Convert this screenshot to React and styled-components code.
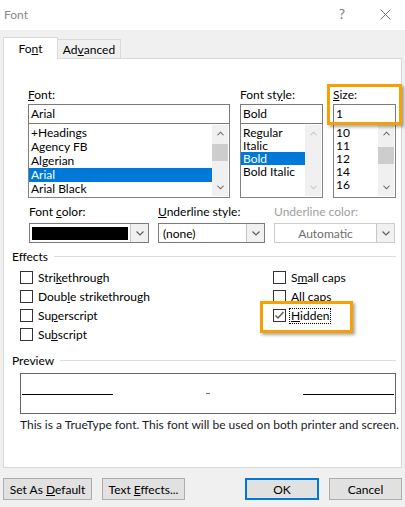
import React from "react";
import styled, { createGlobalStyle } from "styled-components";

const GlobalStyle = createGlobalStyle`
  body {
    margin: 0;
    background: #f0f0f0;
    font-family: Lato, "Noto Sans", sans-serif;
    font-size: 12px;
    color: #000;
  }
`;

const fontItems = ["+Headings", "Agency FB", "Algerian", "Arial", "Arial Black"];
const styleItems = ["Regular", "Italic", "Bold", "Bold Italic"];
const sizeItems = ["10", "11", "12", "14", "16"];

const Chevron = ({ up, color = "#606060", w = 8 }) => (
  <svg width={w} height="5" viewBox="0 0 8 5">
    <polyline
      points={up ? "0.5,4.5 4,1 7.5,4.5" : "0.5,0.5 4,4 7.5,0.5"}
      fill="none"
      stroke={color}
      strokeWidth="1.2"
    />
  </svg>
);

const ListBox = ({ items, selected, rowHeight, thumbTop, disabled }) => (
  <List>
    <Items>
      {items.map((it) => (
        <Item key={it} $h={rowHeight} $active={it === selected}>
          {it}
        </Item>
      ))}
    </Items>
    <Scroll>
      <ArrowBox>
        <Chevron up color={disabled ? "#c4c4c4" : "#606060"} w={7} />
      </ArrowBox>
      <Track>{!disabled && <Thumb $top={thumbTop} />}</Track>
      <ArrowBox>
        <Chevron color={disabled ? "#c4c4c4" : "#606060"} w={7} />
      </ArrowBox>
    </Scroll>
  </List>
);

const Check = ({ checked, children, focus }) => (
  <CheckRow>
    <Box>
      {checked && (
        <svg width="11" height="11" viewBox="0 0 11 11">
          <polyline points="1.5,5.5 4,8 9.5,2" fill="none" stroke="#5a5a5a" strokeWidth="1.4" />
        </svg>
      )}
    </Box>
    <CheckText $focus={focus}>{children}</CheckText>
  </CheckRow>
);

export default function App() {
  return (
    <Window>
      <GlobalStyle />
      <TitleBar>
        <Title>Font</Title>
        <Help>?</Help>
        <Close>
          <svg width="11" height="11" viewBox="0 0 11 11">
            <path d="M0.5 0.5 L10.5 10.5 M10.5 0.5 L0.5 10.5" stroke="#777" strokeWidth="1" />
          </svg>
        </Close>
      </TitleBar>

      <TabStrip>
        <Tab $active>
          Fo<u>n</u>t
        </Tab>
        <Tab>
          Ad<u>v</u>anced
        </Tab>
      </TabStrip>

      <Panel>
        <TopGrid>
          <Column>
            <Label>
              <u>F</u>ont:
            </Label>
            <Input>Arial</Input>
            <ListBox items={fontItems} selected="Arial" rowHeight={14} thumbTop={19} />
          </Column>
          <Column>
            <Label>
              Font st<u>y</u>le:
            </Label>
            <Input>Bold</Input>
            <ListBox items={styleItems} selected="Bold" rowHeight={13} disabled />
          </Column>
          <Column>
            <Highlight $top={-4} $left={-6} $width={75} $height={41} />
            <Label>
              <u>S</u>ize:
            </Label>
            <Input>1</Input>
            <ListBox items={sizeItems} rowHeight={13} thumbTop={22} />
          </Column>
        </TopGrid>

        <ColorRow>
          <div>
            <Label $h={18}>
              Font <u>c</u>olor:
            </Label>
            <Select>
              <SelectValue>
                <Swatch />
              </SelectValue>
              <DropButton>
                <Chevron />
              </DropButton>
            </Select>
          </div>
          <div>
            <Label $h={18}>
              <u>U</u>nderline style:
            </Label>
            <Select>
              <SelectValue>(none)</SelectValue>
              <DropButton>
                <Chevron />
              </DropButton>
            </Select>
          </div>
          <div>
            <Label $h={18} $disabled>
              Underline color:
            </Label>
            <Select $disabled>
              <SelectValue $center $disabled>
                Automatic
              </SelectValue>
              <DropButton>
                <Chevron />
              </DropButton>
            </Select>
          </div>
        </ColorRow>

        <Section>
          <GroupTitle>Effects</GroupTitle>
          <Effects>
            <EffectCol>
              <Check>
                Stri<u>k</u>ethrough
              </Check>
              <Check>
                Doub<u>l</u>e strikethrough
              </Check>
              <Check>
                Su<u>p</u>erscript
              </Check>
              <Check>
                Su<u>b</u>script
              </Check>
            </EffectCol>
            <EffectCol>
              <Check>
                S<u>m</u>all caps
              </Check>
              <Check>
                <u>A</u>ll caps
              </Check>
              <HiddenWrap>
                <Highlight $top={-5} $left={-13} $width={93} $height={32} />
                <Check checked focus>
                  <u>H</u>idden
                </Check>
              </HiddenWrap>
            </EffectCol>
          </Effects>
        </Section>

        <Section $top={8}>
          <GroupTitle>Preview</GroupTitle>
          <PreviewBox>
            <PreviewLine />
            <PreviewDot />
            <PreviewLine />
          </PreviewBox>
          <Note>This is a TrueType font. This font will be used on both printer and screen.</Note>
        </Section>
      </Panel>

      <Buttons>
        <Button $w={89}>
          Set As <u>D</u>efault
        </Button>
        <Button $w={83}>
          Text <u>E</u>ffects...
        </Button>
        <Spacer />
        <Button $w={74} $primary>
          OK
        </Button>
        <Button $w={73}>Cancel</Button>
      </Buttons>
    </Window>
  );
}

// styling for component
const Window = styled.div`
  width: 405px;
  height: 507px;
  display: flex;
  flex-direction: column;
  background: #f0f0f0;
  overflow: hidden;
`;

const TitleBar = styled.div`
  height: 30px;
  background: #fff;
  display: flex;
  align-items: center;
  padding-left: 4px;
`;

const Title = styled.div`
  flex: 1;
  color: #8a8a8a;
  font-size: 12px;
  margin-top: -2px;
`;

const Help = styled.div`
  width: 16px;
  text-align: center;
  color: #777;
  font-size: 14px;
  margin-right: 30px;
  margin-top: -3px;
`;

const Close = styled.div`
  width: 11px;
  margin-right: 14px;
  display: flex;
  margin-top: -2px;
`;

const TabStrip = styled.div`
  display: flex;
  align-items: flex-end;
  height: 21px;
  margin-top: 7px;
  padding-left: 3px;
`;

const Tab = styled.div`
  position: relative;
  z-index: 1;
  box-sizing: border-box;
  height: ${(p) => (p.$active ? "22px" : "19px")};
  margin-bottom: ${(p) => (p.$active ? "-1px" : "0")};
  width: ${(p) => (p.$active ? "55px" : "64px")};
  margin-left: ${(p) => (p.$active ? "0" : "-1px")};
  background: ${(p) => (p.$active ? "#fff" : "#f0f0f0")};
  border: 1px solid #d9d9d9;
  border-bottom: none;
  display: flex;
  align-items: center;
  justify-content: center;
  padding-top: ${(p) => (p.$active ? "0" : "1px")};
`;

const Panel = styled.div`
  box-sizing: border-box;
  margin: 0 3px 0 3px;
  height: 410px;
  background: #fff;
  border: 1px solid #d9d9d9;
  padding-top: 29px;
`;

const TopGrid = styled.div`
  display: grid;
  grid-template-columns: 202px 83px 63px;
  column-gap: 10px;
  margin-left: 24px;
`;

const Column = styled.div`
  position: relative;
  display: flex;
  flex-direction: column;
`;

const Label = styled.div`
  height: ${(p) => p.$h || 16}px;
  line-height: 14px;
  color: ${(p) => (p.$disabled ? "#a0a0a0" : "#000")};
  white-space: nowrap;
`;

const Input = styled.div`
  position: relative;
  z-index: 2;
  box-sizing: border-box;
  height: 20px;
  border: 1px solid #7a7a7a;
  padding-left: 2px;
  line-height: 17px;
  background: #fff;
`;

const List = styled.div`
  box-sizing: border-box;
  height: 75px;
  margin-top: -1px;
  border: 1px solid #828282;
  border-top-color: #c8c8c8;
  display: flex;
  background: #fff;
`;

const Items = styled.div`
  flex: 1;
  padding-top: 2px;
  overflow: hidden;
`;

const Item = styled.div`
  height: ${(p) => p.$h}px;
  line-height: ${(p) => p.$h}px;
  padding-left: 2px;
  white-space: nowrap;
  background: ${(p) => (p.$active ? "#0078d7" : "transparent")};
  color: ${(p) => (p.$active ? "#fff" : "#000")};
`;

const Scroll = styled.div`
  width: 16px;
  background: #f0f0f0;
  display: flex;
  flex-direction: column;
  margin: 1px 1px 1px 0;
`;

const ArrowBox = styled.div`
  height: 17px;
  display: flex;
  align-items: center;
  justify-content: center;
`;

const Track = styled.div`
  flex: 1;
  position: relative;
`;

const Thumb = styled.div`
  margin-top: ${(p) => p.$top - 17}px;
  height: 17px;
  background: #cdcdcd;
`;

const Highlight = styled.div`
  position: absolute;
  z-index: 3;
  box-sizing: border-box;
  top: ${(p) => p.$top}px;
  left: ${(p) => p.$left}px;
  width: ${(p) => p.$width}px;
  height: ${(p) => p.$height}px;
  border: 3px solid #f5a100;
  box-shadow: 2px 2px 3px rgba(0, 0, 0, 0.35);
  pointer-events: none;
`;

const ColorRow = styled.div`
  display: grid;
  grid-template-columns: 120px 107px 121px;
  column-gap: 9px;
  margin: 7px 0 0 25px;
`;

const Select = styled.div`
  box-sizing: border-box;
  height: 20px;
  display: flex;
  border: 1px solid ${(p) => (p.$disabled ? "#cccccc" : "#7a7a7a")};
  background: #fff;
`;

const SelectValue = styled.div`
  flex: 1;
  display: flex;
  align-items: center;
  justify-content: ${(p) => (p.$center ? "center" : "flex-start")};
  padding: 2px;
  padding-left: ${(p) => (p.$center ? "2px" : "4px")};
  color: ${(p) => (p.$disabled ? "#6d6d6d" : "#000")};
`;

const Swatch = styled.div`
  width: 96px;
  height: 13px;
  margin-left: -2px;
  background: #000;
`;

const DropButton = styled.div`
  width: 17px;
  border-left: 1px solid #c8c8c8;
  background: #f0f0f0;
  display: flex;
  align-items: center;
  justify-content: center;
`;

const Section = styled.div`
  margin: ${(p) => p.$top || 5}px 5px 0 8px;
`;

const GroupTitle = styled.div`
  display: flex;
  align-items: center;
  height: 16px;
  &::after {
    content: "";
    flex: 1;
    height: 1px;
    background: #dcdcdc;
    margin-left: 6px;
  }
`;

const Effects = styled.div`
  display: grid;
  grid-template-columns: 253px auto;
  margin: 4px 0 0 8px;
`;

const EffectCol = styled.div`
  display: flex;
  flex-direction: column;
`;

const CheckRow = styled.div`
  height: 19px;
  display: flex;
  align-items: center;
`;

const Box = styled.div`
  box-sizing: border-box;
  width: 13px;
  height: 13px;
  border: 1px solid #333;
  background: #fff;
  display: flex;
  align-items: center;
  justify-content: center;
  margin-right: 4px;
`;

const CheckText = styled.span`
  line-height: 14px;
  padding: 0 1px;
  outline: ${(p) => (p.$focus ? "1px dotted #000" : "none")};
  outline-offset: 0px;
`;

const HiddenWrap = styled.div`
  position: relative;
`;

const PreviewBox = styled.div`
  box-sizing: border-box;
  margin: 5px 0 0 8px;
  width: 376px;
  height: 41px;
  border: 1px solid #646464;
  display: flex;
  align-items: center;
  justify-content: space-between;
  padding: 0 1px;
`;

const PreviewLine = styled.div`
  width: 91px;
  height: 1px;
  background: #000;
  margin-top: 2px;
`;

const PreviewDot = styled.div`
  width: 4px;
  height: 1px;
  background: #777;
  margin-top: 0px;
`;

const Note = styled.div`
  margin: 3px 0 0 8px;
  line-height: 16px;
  color: #1a1a2a;
  white-space: nowrap;
`;

const Buttons = styled.div`
  display: flex;
  margin-top: 10px;
  padding: 0 3px;
  gap: 10px;
`;

const Spacer = styled.div`
  flex: 1;
`;

const Button = styled.button`
  box-sizing: border-box;
  width: ${(p) => p.$w}px;
  height: 22px;
  padding: 0;
  font-family: inherit;
  font-size: 12px;
  color: #000;
  background: #e1e1e1;
  border: ${(p) => (p.$primary ? "2px solid #0078d7" : "1px solid #adadad")};
`;
